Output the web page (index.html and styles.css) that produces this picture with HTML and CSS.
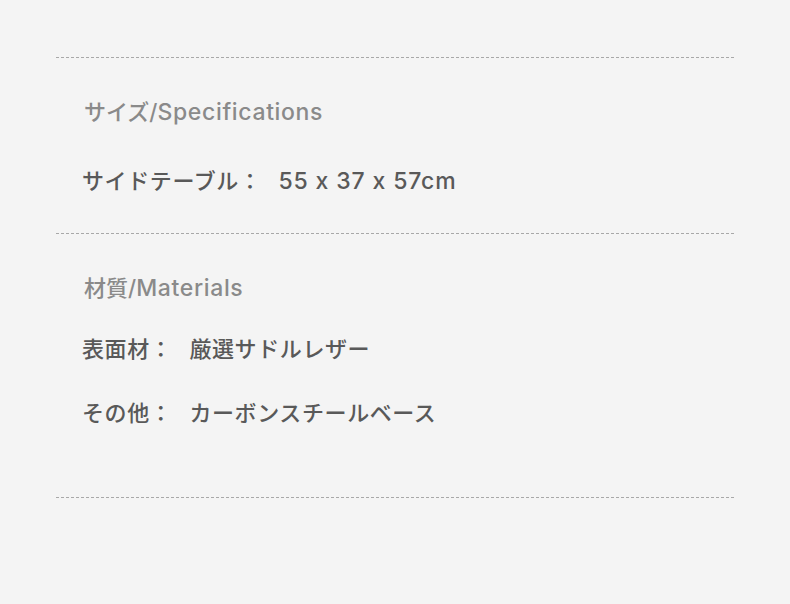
FILE: index.html
```html
<!DOCTYPE html>
<html lang="ja">
<head>
<meta charset="utf-8">
<link rel="stylesheet" href="styles.css">
</head>
<body>
<div class="specs">
  <section class="block block-size">
    <h2 class="block-title">サイズ/<span class="latin">Specifications</span></h2>
    <div class="row row-first">
      <span class="label">サイドテーブル：</span><span class="value latin-value">55 x 37 x 57cm</span>
    </div>
  </section>
  <section class="block block-material">
    <h2 class="block-title">材質/<span class="latin">Materials</span></h2>
    <div class="row row-first">
      <span class="label">表面材：</span><span class="value">厳選サドルレザー</span>
    </div>
    <div class="row row-next">
      <span class="label">その他：</span><span class="value">カーボンスチールベース</span>
    </div>
  </section>
</div>
</body>
</html>
```
FILE: styles.css
```css
html, body {
  margin: 0;
  padding: 0;
  background: #f4f4f4;
}
body {
  font-family: "Inter", "Noto Sans CJK JP", "Noto Sans", sans-serif;
  font-feature-settings: "calt" 0;
  font-size: 22px;
  width: 790px;
  height: 604px;
  overflow: hidden;
}
.specs {
  margin: 0 56px;
  padding-top: 57px;
  border-bottom: 1px dashed #a8a8a8;
}
.block {
  border-top: 1px dashed #a8a8a8;
  padding-left: 26px;
}
.block-size {
  padding-top: 38px;
  padding-bottom: 36px;
}
.block-material {
  padding-top: 38px;
  padding-bottom: 68px;
}
.block-title {
  margin: 0;
  padding-left: 2px;
  font-size: 22px;
  line-height: 32px;
  font-weight: 500;
  color: #8a8a8a;
}
.latin {
  font-size: 23px;
  letter-spacing: 0.65px;
}
.row {
  display: flex;
  line-height: 32px;
  font-weight: 500;
  letter-spacing: 0.6px;
  color: #595959;
}
.latin-value {
  font-size: 23px;
  letter-spacing: 0.85px;
}
.block-size .row-first {
  margin-top: 37px;
}
.block-material .row-first {
  margin-top: 29px;
}
.row-next {
  margin-top: 32px;
}
.label {
  margin-right: 17px;
}
```
